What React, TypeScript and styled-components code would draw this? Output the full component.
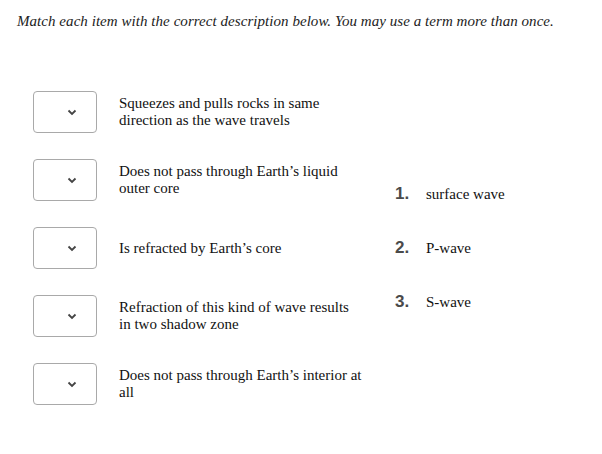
import React from 'react';
import styled, { createGlobalStyle } from 'styled-components';

const GlobalStyle = createGlobalStyle`
  body {
    margin: 0;
    background: #fff;
    font-family: "Liberation Serif", "Times New Roman", serif;
    color: #111;
  }
`;

const Page = styled.div`
  padding: 12px 0 0 17px;
`;

const Instructions = styled.p`
  margin: 0;
  font-style: italic;
  font-size: 15px;
  line-height: 18px;
  letter-spacing: 0.05px;
  color: #222;
`;

const Body = styled.div`
  display: flex;
  align-items: center;
  margin-top: 61px;
  padding-left: 16px;
`;

const Questions = styled.div`
  display: flex;
  flex-direction: column;
  gap: 26px;
  width: 362px;
`;

const Row = styled.div`
  display: flex;
  align-items: center;
  gap: 22px;
`;

const Select = styled.div`
  flex: none;
  box-sizing: content-box;
  width: 48px;
  height: 40px;
  padding-left: 14px;
  border: 1px solid #a9a9a9;
  border-radius: 4px;
  display: flex;
  align-items: center;
  justify-content: center;
`;

const Description = styled.div`
  width: 243px;
  font-size: 15px;
  line-height: 17px;
  color: #111;
`;

const Terms = styled.ol`
  list-style: none;
  margin: 0;
  padding: 0;
  display: flex;
  flex-direction: column;
  gap: 32px;
`;

const Term = styled.li`
  display: flex;
  align-items: baseline;
  font-size: 15px;
  line-height: 22px;
`;

const Num = styled.span`
  width: 31px;
  font-family: "Liberation Sans", Arial, sans-serif;
  font-size: 17px;
  font-weight: bold;
  color: #4a4a4a;
`;

const Chevron = () => (
  <svg width="10" height="7" viewBox="0 0 10 7">
    <path d="M1.5 1.5 L5 5 L8.5 1.5" fill="none" stroke="#444" strokeWidth="1.8" />
  </svg>
);

const items = [
  'Squeezes and pulls rocks in same direction as the wave travels',
  'Does not pass through Earth’s liquid outer core',
  'Is refracted by Earth’s core',
  'Refraction of this kind of wave results in two shadow zone',
  'Does not pass through Earth’s interior at all',
];

const terms = ['surface wave', 'P-wave', 'S-wave'];

const App = () => (
  <Page>
    <GlobalStyle />
    <Instructions>
      Match each item with the correct description below. You may use a term more than once.
    </Instructions>
    <Body>
      <Questions>
        {items.map((text) => (
          <Row key={text}>
            <Select>
              <Chevron />
            </Select>
            <Description>{text}</Description>
          </Row>
        ))}
      </Questions>
      <Terms>
        {terms.map((t, i) => (
          <Term key={t}>
            <Num>{i + 1}.</Num>
            {t}
          </Term>
        ))}
      </Terms>
    </Body>
  </Page>
);

export default App;
